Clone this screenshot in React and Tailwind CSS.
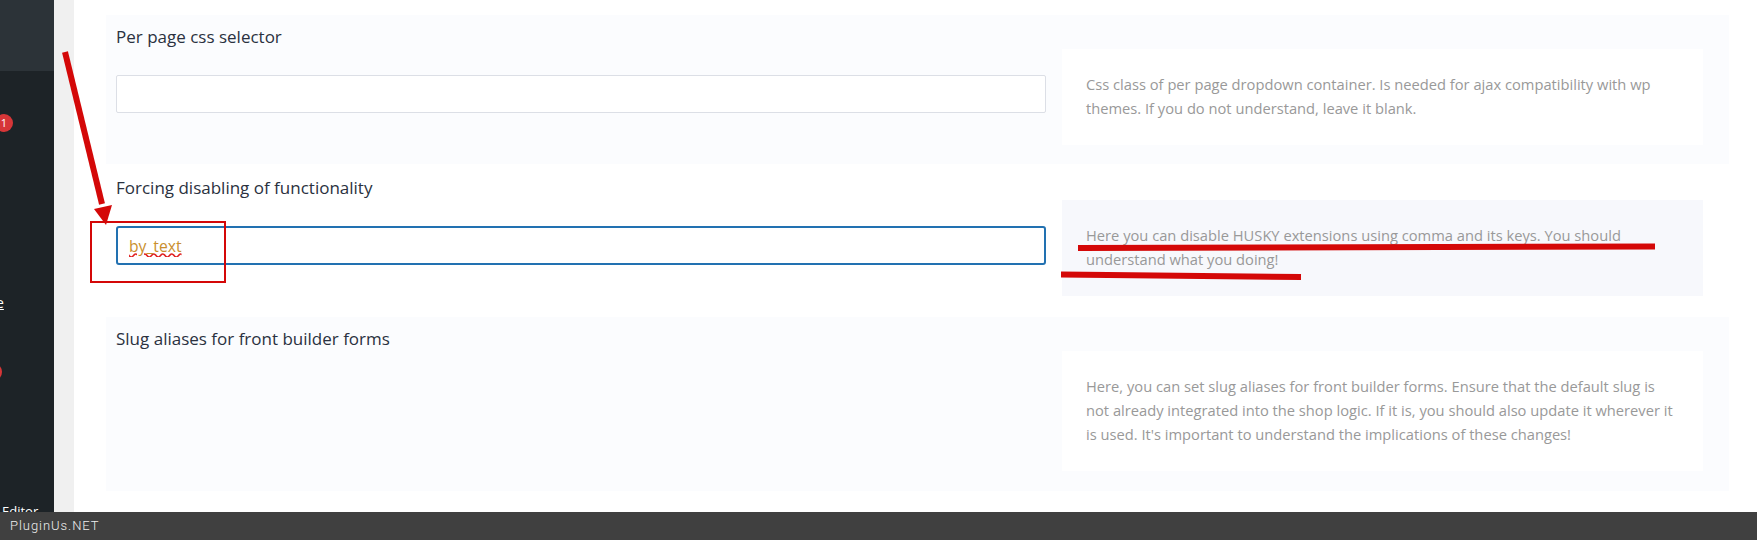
const font = { fontFamily: '"Open Sans", "Lato", sans-serif' };

const Help = ({ lines, tint }) => (
  <div className={`w-[641px] px-6 pt-[23px] pb-[25px] text-[14.7px] leading-6 text-[#999] ${tint ? "bg-[#f7f8fc]" : "bg-white"}`}>
    {lines.map((l) => (
      <div key={l} className="whitespace-nowrap">{l}</div>
    ))}
  </div>
);

const Panel = ({ title, tint, children, className }) => (
  <section className={`w-[1623px] pl-[10px] ${tint ? "bg-[#fbfcfe]" : "bg-white"} ${className}`}>
    <h3 className="relative top-[1px] text-[17px] leading-[26px] text-[#2a3140]">{title}</h3>
    <div className="flex gap-4">{children}</div>
  </section>
);

const Annotations = () => (
  <svg className="absolute left-0 top-0 pointer-events-none" width="1757" height="512" viewBox="0 0 1757 512" fill="none">
    <rect x="91" y="222" width="134" height="60" stroke="#d40808" strokeWidth="2" />
    <path d="M65 52 L102 204" stroke="#d40808" strokeWidth="6" />
    <path d="M94 209 L112 205 L106 225 Z" fill="#d40808" />
    <path d="M1078 248 L1655 246.500" stroke="#d40808" strokeWidth="6" />
    <path d="M1061 274.500 L1301 277" stroke="#d40808" strokeWidth="6" />
  </svg>
);

export default function App() {
  return (
    <div className="relative h-[540px] w-[1757px] overflow-hidden bg-white flex flex-col" style={font}>
      <div className="flex flex-1 min-h-0">
        {/* Sidebar, cut off at the left edge of the shot */}
        <aside className="w-[54px] shrink-0 overflow-hidden bg-[#1d2327] flex flex-col text-sm text-white">
          <div className="h-[71px] shrink-0 bg-[#2c3338]" />
          <div className="mt-[43px] -ml-[5px] h-[18px] w-[18px] shrink-0 rounded-full bg-[#d63638] text-center text-[11px] leading-[18px]">1</div>
          <div className="mt-[161px] -ml-[4px] shrink-0 leading-5 underline">e</div>
          <div className="mt-[50px] -ml-[16px] h-[18px] w-[18px] shrink-0 rounded-full bg-[#d63638]" />
          <div className="mt-[120px] ml-[2px] shrink-0 text-[13px] leading-5">Editor</div>
        </aside>
        <div className="w-[20px] shrink-0 bg-[#f0f0f0]" />
        <main className="flex-1 pl-[32px] pt-[15px]">
          <Panel title="Per page css selector" tint className="h-[149px] pt-[8px]">
            <input readOnly className="mt-[26px] h-[38px] w-[930px] rounded-[2px] border border-[#dcdfe6] bg-white" />
            <Help lines={["Css class of per page dropdown container. Is needed for ajax compatibility with wp", "themes. If you do not understand, leave it blank."]} />
          </Panel>
          <Panel title="Forcing disabling of functionality" className="h-[153px] pt-[10px]">
            <input
              readOnly
              value="by_text"
              className="mt-[26px] h-[39px] w-[930px] rounded-[3px] border-2 border-[#2271b1] bg-white px-[11px] text-[15.7px] text-[#c98f2e] underline decoration-wavy decoration-[#e02020]"
            />
            <Help tint lines={["Here you can disable HUSKY extensions using comma and its keys. You should", "understand what you doing!"]} />
          </Panel>
          <Panel title="Slug aliases for front builder forms" tint className="h-[174px] pt-[8px]">
            <div className="w-[930px]" />
            <Help lines={["Here, you can set slug aliases for front builder forms. Ensure that the default slug is", "not already integrated into the shop logic. If it is, you should also update it wherever it", "is used. It's important to understand the implications of these changes!"]} />
          </Panel>
        </main>
      </div>
      <footer className="h-[28px] shrink-0 bg-[#404040] pl-[10px] text-[13px] font-light leading-[28px] tracking-[0.95px] text-[#eeeeee]" style={{ fontFamily: '"Roboto", sans-serif' }}>
        PluginUs.NET
      </footer>
      <Annotations />
    </div>
  );
}
